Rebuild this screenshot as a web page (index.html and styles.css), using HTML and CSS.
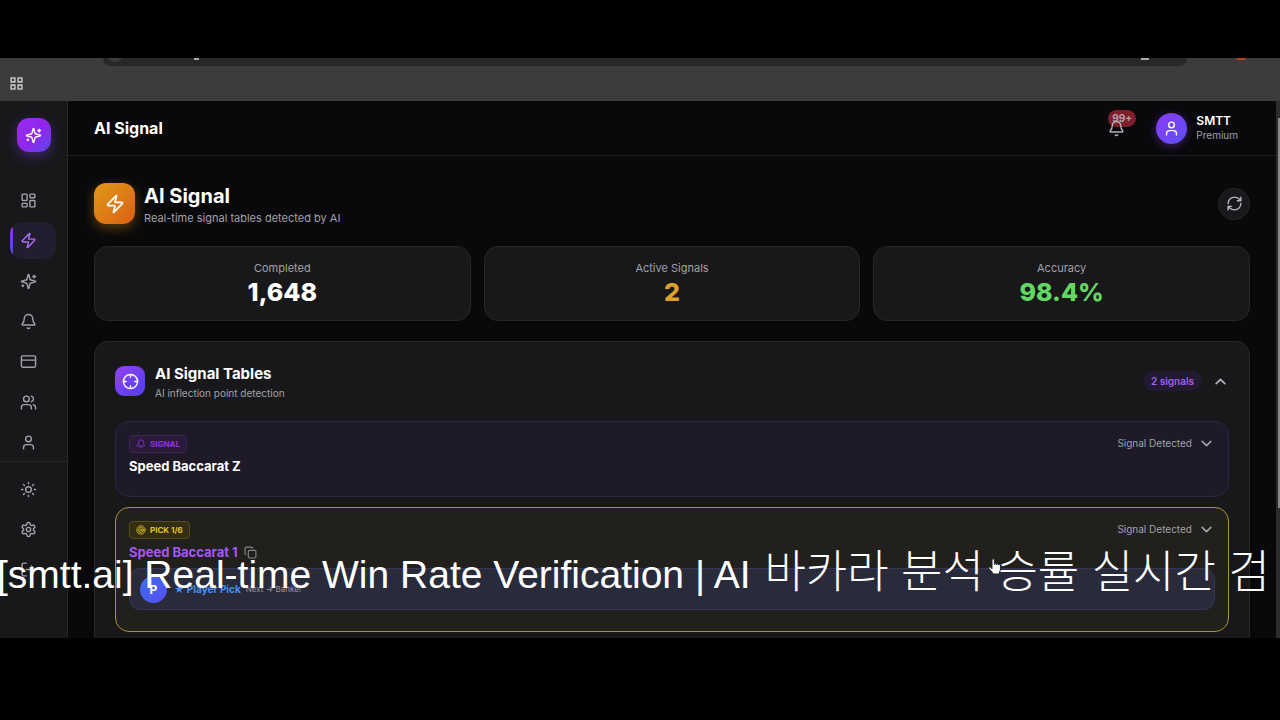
FILE: index.html
```html
<!DOCTYPE html>
<html lang="en">
<head>
  <meta charset="UTF-8">
  <meta name="viewport" content="width=device-width, initial-scale=1.0">
  <title>AI Signal</title>
  <link rel="stylesheet" href="styles.css">
</head>
<body>
  <!-- Icons -->
  <svg class="sprite" aria-hidden="true">
    <symbol id="i-zap" viewBox="0 0 24 24"><path d="M4 14a1 1 0 0 1-.78-1.63l9.9-10.2a.5.5 0 0 1 .86.46l-1.92 6.02A1 1 0 0 0 13 10h7a1 1 0 0 1 .78 1.63l-9.9 10.2a.5.5 0 0 1-.86-.46l1.92-6.02A1 1 0 0 0 11 14z"/></symbol>
    <symbol id="i-sparkles" viewBox="0 0 24 24"><path d="M9.94 15.5A2 2 0 0 0 8.5 14.06l-6.14-1.58a.5.5 0 0 1 0-.96L8.5 9.94A2 2 0 0 0 9.94 8.5l1.58-6.14a.5.5 0 0 1 .96 0L14.06 8.5A2 2 0 0 0 15.5 9.94l6.14 1.58a.5.5 0 0 1 0 .96L15.5 14.06a2 2 0 0 0-1.44 1.44l-1.58 6.14a.5.5 0 0 1-.96 0z"/><path d="M20 3v4M22 5h-4M4 17v2M5 18H3"/></symbol>
    <symbol id="i-bell" viewBox="0 0 24 24"><path d="M10.27 21a2 2 0 0 0 3.46 0M3.26 15.33A1 1 0 0 0 4 17h16a1 1 0 0 0 .74-1.67C19.41 13.96 18 12.5 18 8A6 6 0 0 0 6 8c0 4.5-1.41 5.96-2.74 7.33"/></symbol>
    <symbol id="i-grid" viewBox="0 0 24 24"><rect x="3" y="3" width="7" height="9" rx="1"/><rect x="14" y="3" width="7" height="5" rx="1"/><rect x="14" y="12" width="7" height="9" rx="1"/><rect x="3" y="16" width="7" height="5" rx="1"/></symbol>
    <symbol id="i-card" viewBox="0 0 24 24"><rect x="2" y="4" width="20" height="16" rx="2"/><path d="M2 10h20"/></symbol>
    <symbol id="i-users" viewBox="0 0 24 24"><path d="M16 21v-2a4 4 0 0 0-4-4H6a4 4 0 0 0-4 4v2"/><circle cx="9" cy="7" r="4"/><path d="M22 21v-2a4 4 0 0 0-3-3.87M16 3.13a4 4 0 0 1 0 7.75"/></symbol>
    <symbol id="i-user" viewBox="0 0 24 24"><path d="M19 21v-2a4 4 0 0 0-4-4H9a4 4 0 0 0-4 4v2"/><circle cx="12" cy="7" r="4"/></symbol>
    <symbol id="i-sun" viewBox="0 0 24 24"><circle cx="12" cy="12" r="4"/><path d="M12 2v2M12 20v2M4.93 4.93l1.41 1.41M17.66 17.66l1.41 1.41M2 12h2M20 12h2M6.34 17.66l-1.41 1.41M19.07 4.93l-1.41 1.41"/></symbol>
    <symbol id="i-gear" viewBox="0 0 24 24"><path d="M12.22 2h-.44a2 2 0 0 0-2 2v.18a2 2 0 0 1-1 1.73l-.43.25a2 2 0 0 1-2 0l-.15-.08a2 2 0 0 0-2.73.73l-.22.38a2 2 0 0 0 .73 2.73l.15.1a2 2 0 0 1 1 1.72v.51a2 2 0 0 1-1 1.74l-.15.09a2 2 0 0 0-.73 2.73l.22.38a2 2 0 0 0 2.73.73l.15-.08a2 2 0 0 1 2 0l.43.25a2 2 0 0 1 1 1.73V20a2 2 0 0 0 2 2h.44a2 2 0 0 0 2-2v-.18a2 2 0 0 1 1-1.73l.43-.25a2 2 0 0 1 2 0l.15.08a2 2 0 0 0 2.73-.73l.22-.39a2 2 0 0 0-.73-2.73l-.15-.08a2 2 0 0 1-1-1.74v-.5a2 2 0 0 1 1-1.74l.15-.09a2 2 0 0 0 .73-2.73l-.22-.38a2 2 0 0 0-2.73-.73l-.15.08a2 2 0 0 1-2 0l-.43-.25a2 2 0 0 1-1-1.73V4a2 2 0 0 0-2-2z"/><circle cx="12" cy="12" r="3"/></symbol>
    <symbol id="i-logout" viewBox="0 0 24 24"><path d="M9 21H5a2 2 0 0 1-2-2V5a2 2 0 0 1 2-2h4M16 17l5-5-5-5M21 12H9"/></symbol>
    <symbol id="i-refresh" viewBox="0 0 24 24"><path d="M3 12a9 9 0 0 1 9-9 9.75 9.75 0 0 1 6.74 2.74L21 8M21 3v5h-5M21 12a9 9 0 0 1-9 9 9.75 9.75 0 0 1-6.74-2.74L3 16M8 16H3v5"/></symbol>
    <symbol id="i-crosshair" viewBox="0 0 24 24"><circle cx="12" cy="12" r="10"/><path d="M22 12h-4M6 12H2M12 6V2M12 22v-4"/></symbol>
    <symbol id="i-target" viewBox="0 0 24 24"><circle cx="12" cy="12" r="10"/><circle cx="12" cy="12" r="6"/><circle cx="12" cy="12" r="2"/></symbol>
    <symbol id="i-copy" viewBox="0 0 24 24"><rect x="8" y="8" width="14" height="14" rx="2"/><path d="M4 16c-1.1 0-2-.9-2-2V4c0-1.1.9-2 2-2h10c1.1 0 2 .9 2 2"/></symbol>
    <symbol id="i-down" viewBox="0 0 24 24"><path d="m4 8 8 8 8-8"/></symbol>
    <symbol id="i-up" viewBox="0 0 24 24"><path d="m4 16 8-8 8 8"/></symbol>
    <symbol id="i-apps" viewBox="0 0 12 12"><path d="M1 1h3.500v3.500H1zM7.500 1H11v3.500H7.500zM1 7.500h3.500V11H1zM7.500 7.500H11V11H7.500z"/></symbol>
  </svg>

  <div class="frame">
    <!-- Browser bar -->
    <div class="browser">
      <div class="address"><i class="site-dot"></i><i class="mark mark-left"></i><i class="mark mark-right"></i></div>
      <i class="alert-dot"></i>
      <button class="apps" aria-label="Apps"><svg><use href="#i-apps"/></svg></button>
    </div>

    <div class="app">
      <!-- Sidebar -->
      <aside class="sidebar">
        <a class="logo" href="#" aria-label="Home"><svg class="icon"><use href="#i-sparkles"/></svg></a>
        <nav class="nav">
          <a class="nav-item" href="#" aria-label="Dashboard"><svg class="icon"><use href="#i-grid"/></svg></a>
          <a class="nav-item active" href="#" aria-label="AI Signal"><svg class="icon"><use href="#i-zap"/></svg></a>
          <a class="nav-item" href="#" aria-label="AI"><svg class="icon"><use href="#i-sparkles"/></svg></a>
          <a class="nav-item" href="#" aria-label="Notifications"><svg class="icon"><use href="#i-bell"/></svg></a>
          <a class="nav-item" href="#" aria-label="Billing"><svg class="icon"><use href="#i-card"/></svg></a>
          <a class="nav-item" href="#" aria-label="Members"><svg class="icon"><use href="#i-users"/></svg></a>
          <a class="nav-item" href="#" aria-label="Profile"><svg class="icon"><use href="#i-user"/></svg></a>
        </nav>
        <div class="nav nav-bottom">
          <button class="nav-item" aria-label="Theme"><svg class="icon"><use href="#i-sun"/></svg></button>
          <button class="nav-item" aria-label="Settings"><svg class="icon"><use href="#i-gear"/></svg></button>
          <button class="nav-item" aria-label="Log out"><svg class="icon"><use href="#i-logout"/></svg></button>
        </div>
      </aside>

      <div class="main">
        <header class="topbar">
          <h2 class="topbar-title">AI Signal</h2>
          <button class="bell" aria-label="Notifications"><svg class="icon"><use href="#i-bell"/></svg><span class="badge">99+</span></button>
          <span class="avatar"><svg class="icon"><use href="#i-user"/></svg></span>
          <div class="account">
            <div class="account-name">SMTT</div>
            <div class="account-plan">Premium</div>
          </div>
        </header>

        <main class="content">
          <div class="page-head">
            <span class="page-icon"><svg class="icon icon-lg"><use href="#i-zap"/></svg></span>
            <div class="page-text">
              <h1 class="page-title">AI Signal</h1>
              <p class="page-sub">Real-time signal tables detected by AI</p>
            </div>
            <button class="refresh" aria-label="Refresh"><svg class="icon"><use href="#i-refresh"/></svg></button>
          </div>

          <div class="stats">
            <div class="stat"><div class="stat-label">Completed</div><div class="stat-value">1,648</div></div>
            <div class="stat"><div class="stat-label">Active Signals</div><div class="stat-value orange">2</div></div>
            <div class="stat"><div class="stat-label">Accuracy</div><div class="stat-value green">98.4%</div></div>
          </div>

          <section class="panel">
            <div class="panel-head">
              <span class="panel-icon"><svg class="icon"><use href="#i-crosshair"/></svg></span>
              <div class="panel-text">
                <h3 class="panel-title">AI Signal Tables</h3>
                <p class="panel-sub">AI inflection point detection</p>
              </div>
              <span class="count">2 signals</span>
              <button class="toggle" aria-label="Collapse"><svg class="icon icon-sm chevron"><use href="#i-up"/></svg></button>
            </div>

            <article class="signal">
              <div class="signal-info">
                <span class="tag"><svg class="icon icon-xs"><use href="#i-bell"/></svg>SIGNAL</span>
                <div class="signal-name">Speed Baccarat Z</div>
              </div>
              <button class="status">Signal Detected<svg class="icon icon-sm chevron"><use href="#i-down"/></svg></button>
            </article>

            <article class="signal pick">
              <div class="signal-info">
                <span class="tag"><svg class="icon icon-xs"><use href="#i-target"/></svg>PICK 1/6</span>
                <div class="signal-name">Speed Baccarat 1<svg class="icon icon-sm copy"><use href="#i-copy"/></svg></div>
              </div>
              <button class="status">Signal Detected<svg class="icon icon-sm chevron"><use href="#i-down"/></svg></button>
              <div class="pick-row">
                <span class="player">P</span>
                <span class="pick-name">★ Player Pick</span>
                <span class="pick-next">Next → Banker</span>
              </div>
            </article>
          </section>
        </main>
      </div>
      <div class="scrollbar"><div class="thumb"></div></div>
    </div>
  </div>

  <!-- Caption over the video -->
  <div class="caption">[smtt.ai] Real-time Win Rate Verification | AI <span class="caption-ko" lang="ko">바카라 분석 승률 실시간 검</span></div>
  <svg class="cursor" viewBox="0 0 14 17"><path d="M4 2a1.200 1.200 0 0 1 2.400 0v4.500a1 1 0 0 1 2 .2 1 1 0 0 1 2 .4 1 1 0 0 1 2 .8V12l-1.400 4H5.500L1 10.500C.2 9.300 1.500 8.500 2.500 9.300L4 10.800z"/></svg>
</body>
</html>
```

FILE: styles.css
```css
* {
  box-sizing: border-box;
}

body {
  display: flex;
  height: 100vh;
  margin: 0;
  padding: 58px 0 82px;
  overflow: hidden;
  background: #000;
  color: #fff;
  font-family: Inter, sans-serif;
  font-size: 11px;
}

h1, h2, h3, p {
  margin: 0;
}

button {
  padding: 0;
  border: 0;
  background: none;
  color: inherit;
  font: inherit;
  cursor: pointer;
}

a {
  color: inherit;
}

.sprite {
  position: absolute;
  width: 0;
  height: 0;
}

.icon {
  display: block;
  flex-shrink: 0;
  width: 17px;
  height: 17px;
  fill: none;
  stroke: currentColor;
  stroke-width: 2;
  stroke-linecap: round;
  stroke-linejoin: round;
}

.icon-lg {
  width: 20px;
  height: 20px;
}

.icon-sm {
  width: 13px;
  height: 13px;
}

.icon-xs {
  width: 10px;
  height: 10px;
}

.chevron {
  stroke-width: 3;
}

.frame {
  flex: 1;
  display: flex;
  flex-direction: column;
  min-width: 0;
  overflow: hidden;
}

/* Browser bar */
.browser {
  position: relative;
  flex-shrink: 0;
  height: 43px;
  background: #3c3c3c;
}

.address {
  position: relative;
  height: 8px;
  margin: 0 93px 0 103px;
  border-radius: 0 0 12px 12px;
  background: #282828;
  overflow: hidden;
}

.site-dot {
  position: absolute;
  left: 4px;
  bottom: 4px;
  width: 16px;
  height: 16px;
  border-radius: 50%;
  background: #3c3c3c;
}

.mark {
  position: absolute;
  top: 0;
  width: 5px;
  height: 2px;
  background: #aaa;
}

.mark-left {
  left: 91px;
}

.mark-right {
  right: 38px;
  width: 8px;
}

.alert-dot {
  position: absolute;
  top: 0;
  right: 34px;
  width: 10px;
  height: 2px;
  border-radius: 0 0 5px 5px;
  background: #b8401c;
}

.apps {
  display: block;
  margin: 11px 0 0 10px;
}

.apps svg {
  display: block;
  width: 13px;
  height: 13px;
  fill: none;
  stroke: #c4c4c4;
  stroke-width: 1.4;
}

/* Sidebar */
.app {
  flex: 1;
  display: flex;
  min-height: 0;
  background: #09090b;
}

.sidebar {
  flex-shrink: 0;
  width: 68px;
  border-right: 1px solid #27272a;
  background: #18181a;
}

.logo {
  display: grid;
  place-items: center;
  width: 34px;
  height: 34px;
  margin: 17px auto 30px;
  border-radius: 12px;
  background: linear-gradient(135deg, #9a2cf0, #9325ec 50%, #5a48ea);
  box-shadow: 0 4px 12px rgba(124, 58, 237, 0.4);
}

.nav {
  display: flex;
  flex-direction: column;
  justify-content: space-between;
  height: 279px;
  padding: 0 11px 0 10px;
}

.nav-bottom {
  justify-content: flex-start;
  gap: 3px;
  height: auto;
  padding-top: 9px;
  border-top: 1px solid #27272a;
}

.nav-item {
  display: flex;
  align-items: center;
  height: 37px;
  padding-left: 10px;
  border-radius: 12px;
  color: #a1a1aa;
}

.nav-item.active {
  position: relative;
  overflow: hidden;
  background: #221e30;
  color: #a970f0;
}

.nav-item.active::before {
  content: "";
  position: absolute;
  left: 0;
  top: 5px;
  bottom: 5px;
  width: 3px;
  border-radius: 3px;
  background: linear-gradient(#9333ea, #4f46e5);
}

/* Top bar */
.main {
  flex: 1;
  min-width: 0;
}

.topbar {
  display: flex;
  align-items: center;
  height: 55px;
  padding: 0 38px 0 26px;
  border-bottom: 1px solid #1e1e21;
}

.topbar-title {
  margin-right: auto;
  font-size: 16px;
  font-weight: 700;
}

.bell {
  position: relative;
  z-index: 0;
  margin-right: 31px;
  color: #b4b4bb;
}

.badge {
  position: absolute;
  left: 0;
  top: -10px;
  z-index: -1;
  padding: 0 4px;
  border-radius: 9px;
  background: #7d1f2c;
  color: #b5a0a5;
  font-size: 10px;
  font-weight: 700;
  line-height: 17px;
}

.avatar {
  display: grid;
  place-items: center;
  width: 31px;
  height: 31px;
  margin-right: 9px;
  border-radius: 50%;
  background: linear-gradient(135deg, #8b3cf7, #5b50f0);
  box-shadow: 0 2px 8px rgba(139, 60, 247, 0.4);
}

.account-name {
  font-size: 12px;
  font-weight: 600;
  line-height: 14px;
}

.account-plan {
  color: #a1a1aa;
  font-size: 10px;
  line-height: 14px;
}

/* Page */
.content {
  padding: 27px 26px;
}

.page-head {
  display: flex;
  align-items: center;
  height: 41px;
  margin-bottom: 22px;
}

.page-icon {
  display: grid;
  place-items: center;
  width: 41px;
  height: 41px;
  margin-right: 9px;
  border-radius: 12px;
  background: linear-gradient(135deg, #e09a18, #dc5f14);
  box-shadow: 0 4px 12px rgba(217, 140, 20, 0.4);
}

.page-text {
  padding-top: 4px;
}

.page-title {
  font-size: 20px;
  font-weight: 700;
  line-height: 24px;
}

.page-sub {
  color: #a1a1aa;
  font-size: 11px;
  line-height: 20px;
}

.refresh {
  display: grid;
  place-items: center;
  width: 32px;
  height: 32px;
  margin-left: auto;
  border: 1px solid #27272a;
  border-radius: 50%;
  background: #18181a;
  color: #b4b4bb;
}

.stats {
  display: grid;
  grid-template-columns: repeat(3, 1fr);
  gap: 13px;
  margin-bottom: 20px;
}

.stat {
  padding: 13px;
  border: 1px solid #27272a;
  border-radius: 14px;
  background: #18181a;
  text-align: center;
}

.stat-label {
  color: #a1a1aa;
  font-size: 11px;
  line-height: 17px;
}

.stat-value {
  font-size: 25px;
  font-weight: 800;
  line-height: 30px;
}

.orange {
  color: #e2a12a;
}

.green {
  color: #62d862;
}

/* Signal tables */
.panel {
  padding: 20px;
  border: 1px solid #27272a;
  border-radius: 14px;
  background: #18181a;
}

.panel-head {
  display: flex;
  align-items: center;
  height: 38px;
  margin-bottom: 21px;
}

.panel-icon {
  display: grid;
  place-items: center;
  width: 30px;
  height: 30px;
  margin-right: 10px;
  border-radius: 9px;
  background: linear-gradient(135deg, #9440f5, #5040ea);
}

.panel-text {
  padding-top: 3px;
}

.panel-title {
  font-size: 15px;
  font-weight: 700;
  line-height: 20px;
}

.panel-sub {
  color: #a1a1aa;
  font-size: 10px;
  line-height: 18px;
}

.count {
  margin-left: auto;
  padding: 0 8px;
  border-radius: 10px;
  background: #211a30;
  color: #a35ff0;
  font-size: 10px;
  font-weight: 600;
  line-height: 20px;
}

.toggle {
  margin: 0 2px 0 12px;
  color: #b4b4bb;
}

.signal {
  display: flex;
  flex-wrap: wrap;
  align-content: flex-start;
  align-items: flex-start;
  justify-content: space-between;
  min-height: 76px;
  margin-bottom: 10px;
  padding: 13px;
  border: 1px solid #2e2548;
  border-radius: 14px;
  background: #1e1a28;
}

.tag {
  display: inline-flex;
  align-items: center;
  gap: 4px;
  height: 18px;
  padding: 0 6px;
  border: 1px solid #3d2358;
  border-radius: 4px;
  background: #281a38;
  color: #9333ea;
  font-size: 8px;
  font-weight: 700;
}

.signal-name {
  display: flex;
  align-items: center;
  gap: 6px;
  margin-top: 4px;
  font-size: 13px;
  font-weight: 700;
  line-height: 18px;
}

.status {
  display: flex;
  align-items: center;
  gap: 8px;
  margin-right: 2px;
  color: #a1a1aa;
  font-size: 10px;
  line-height: 16px;
}

.pick {
  min-height: 125px;
  border-color: #a8962e;
  background: #22201c;
}

.pick .tag {
  border-color: #574d18;
  background: #332d14;
  color: #e5c522;
}

.pick .signal-name {
  color: #a855f7;
}

.copy {
  color: #85858c;
}

.pick-row {
  display: flex;
  align-items: center;
  width: 100%;
  height: 42px;
  margin-top: 7px;
  padding: 0 10px;
  border: 1px solid #36375a;
  border-radius: 11px;
  background: #2a2b3a;
}

.player {
  display: grid;
  place-items: center;
  width: 27px;
  height: 27px;
  margin-right: 7px;
  border-radius: 50%;
  background: linear-gradient(135deg, #3f6cf0, #5450ee);
  font-size: 12px;
  font-weight: 700;
}

.pick-name {
  margin-right: 5px;
  color: #4b8ff0;
  font-size: 10px;
  font-weight: 700;
}

.pick-next {
  color: #96969e;
  font-size: 8px;
}

.scrollbar {
  flex-shrink: 0;
  width: 4px;
  padding-top: 17px;
  background: #2c2c2e;
}

.thumb {
  width: 2px;
  height: 390px;
  margin-left: auto;
  background: #8a8a8a;
}

/* Caption */
.caption {
  position: absolute;
  left: -3px;
  top: 546px;
  width: calc(100% + 3px);
  overflow: hidden;
  color: #fff;
  font-family: "Liberation Sans", sans-serif;
  font-size: 39px;
  line-height: 54px;
  white-space: nowrap;
}

.caption-ko {
  padding-left: 3px;
  font-family: "Liberation Sans", "Noto Sans CJK KR", sans-serif;
  font-size: 45px;
  font-weight: 300;
}

.cursor {
  position: absolute;
  left: 988px;
  top: 558px;
  width: 14px;
  height: 17px;
  fill: #fff;
  stroke: #222;
  stroke-width: 1;
}
```
